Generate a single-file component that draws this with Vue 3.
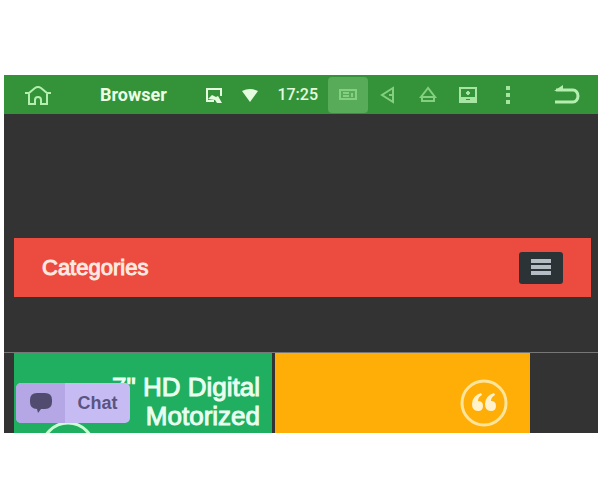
<template>
    <main class="screen">
        <header class="status-bar">
            <button class="home" type="button" aria-label="Home">
                <svg width="28" height="22" viewBox="0 0 28 22">
                    <path d="M1 9h4l6-5q3-2 6 0l6 5h4M5 8v12h6v-4a3 3 0 0 1 6 0v4h6V8" />
                </svg>
            </button>
            <span class="title">Browser</span>

            <div class="indicators">
                <svg width="18" height="18" viewBox="0 0 18 18" aria-hidden="true">
                    <path d="M16 10V3H2v12h7" />
                    <path class="solid" d="M3 13l4-4 4 2 2-1 4 7h-5l-2-3z" />
                </svg>
                <svg width="18" height="18" viewBox="0 0 18 18" aria-hidden="true">
                    <path class="solid" d="M1 5q8-4 16 0L9 16z" />
                </svg>
                <time class="clock">17:25</time>
            </div>

            <nav class="actions">
                <button class="active" type="button" aria-label="Cast">
                    <svg width="18" height="14" viewBox="0 0 18 14">
                        <path d="M1 2h16v9H1zM4 5h6M4 8h6M13 5v4" />
                    </svg>
                </button>
                <button type="button" aria-label="Previous">
                    <svg width="16" height="18" viewBox="0 0 16 18">
                        <path d="M13 2v14L2 9zM13 9H9" />
                    </svg>
                </button>
                <button type="button" aria-label="Eject">
                    <svg width="18" height="18" viewBox="0 0 18 18">
                        <path d="M9 2 2 11h14zM3 11v4h12v-4" />
                    </svg>
                </button>
                <button type="button" aria-label="Screen">
                    <svg class="bright" width="20" height="18" viewBox="0 0 20 18">
                        <path d="M2 2h16v10H2zM10 5v4M8 7h4" />
                        <path class="solid" d="M1 12h7v2h4v-2h7v5H1z" />
                    </svg>
                </button>
                <button class="bright" type="button" aria-label="More">
                    <svg width="6" height="20" viewBox="0 0 6 20">
                        <path class="solid" d="M1 1h4v4H1zM1 8h4v4H1zM1 15h4v4H1z" />
                    </svg>
                </button>
            </nav>
            <button class="back" type="button" aria-label="Back">
                <svg width="28" height="20" viewBox="0 0 28 20">
                    <path d="M3 5h17a5 6 0 0 1 0 12H2" />
                    <path class="solid" d="M1 6 10 0v6z" />
                </svg>
            </button>
        </header>

        <section class="categories">
            <h1>Categories</h1>
            <button class="menu" type="button" aria-label="Open categories">
                <svg width="20" height="17" viewBox="0 0 20 17">
                    <path d="M0 2h20M0 8h20M0 14h20" />
                </svg>
            </button>
        </section>

        <section class="cards">
            <article class="card green">
                <svg class="ring" width="56" height="56" viewBox="0 0 56 56" aria-hidden="true">
                    <circle cx="28" cy="28" r="26" />
                </svg>
                <h2>7" HD Digital<br />Motorized</h2>
                <button class="chat" type="button">
                    <span class="bubble">
                        <svg width="24" height="22" viewBox="0 0 24 22" aria-hidden="true">
                            <path d="M8 1h8q7 0 7 7v2q0 7-7 7h-4l-3 4-1-4q-7 0-7-7V8q0-7 7-7z" />
                        </svg>
                    </span>
                    <span class="chat-label">Chat</span>
                </button>
            </article>
            <article class="card orange">
                <svg width="50" height="50" viewBox="0 0 50 50" aria-hidden="true">
                    <circle cx="25" cy="25" r="22" />
                    <path
                        class="quote"
                        d="M23 17q-4 2-4 6 5 0 5 5t-5 5q-6 0-6-7 0-8 9-11zM36 17q-4 2-4 6 5 0 5 5t-5 5q-6 0-6-7 0-8 9-11z"
                    />
                </svg>
            </article>
        </section>
    </main>
</template>

<script setup></script>

<style>
body {
    background: #fff;
}
</style>

<style scoped>
.screen {
    margin: 75px 2px 0 4px;
    background: #333;
    color: #fff;
    font-family: "Liberation Sans", Arial, sans-serif;
}

button {
    display: flex;
    align-items: center;
    justify-content: center;
    padding: 0;
    border: 0;
    background: none;
    color: inherit;
    font: inherit;
}

/* Status bar */
.status-bar {
    display: flex;
    align-items: center;
    height: 39px;
    padding: 0 10px 0 20px;
    background: #349338;
    color: #b4efb0;
}

.status-bar svg {
    fill: none;
    stroke: currentColor;
    stroke-width: 2;
}

.status-bar .solid {
    fill: currentColor;
    stroke: none;
}

.title {
    margin-left: 48px;
    color: #eaffe6;
    font: bold 18px Roboto, sans-serif;
}

.indicators {
    display: flex;
    align-items: center;
    gap: 18px;
    margin-left: auto;
    color: #e4fbe0;
}

.clock {
    font: 500 16px Roboto, sans-serif;
}

.actions {
    display: flex;
    margin-left: 10px;
    color: #84cf80;
}

.actions .bright {
    color: #a6e6a2;
}

.actions button {
    width: 40px;
    height: 36px;
}

.actions .active {
    border-radius: 4px;
    background: #58ab58;
}

.back {
    width: 42px;
    margin-left: 18px;
}

.back svg {
    stroke-width: 3;
}

/* Categories strip */
.categories {
    display: flex;
    align-items: center;
    justify-content: space-between;
    height: 59px;
    margin: 124px 7px 55px 10px;
    padding: 0 28px;
    background: #ec4c40;
}

.categories h1 {
    margin: 0;
    color: #ffe9e2;
    font-size: 22px;
    font-weight: 400;
    -webkit-text-stroke: 1px currentColor;
}

.menu {
    width: 44px;
    height: 32px;
    border-radius: 3px;
    background: #2b3337;
}

.menu svg {
    stroke: #b4bcc4;
    stroke-width: 4;
}

/* Cards */
.cards {
    display: grid;
    grid-template-columns: 258fr 255fr 58fr;
    gap: 3px;
    height: 80px;
    padding: 0 7px 0 10px;
    border-top: 1px solid #777;
}

.card {
    position: relative;
    overflow: hidden;
}

.green {
    background: #20ae60;
}

.green h2 {
    margin: 20px 12px 0 0;
    color: #e9fff0;
    font-size: 26px;
    font-weight: 400;
    line-height: 29px;
    text-align: right;
    -webkit-text-stroke: 1px currentColor;
}

.ring {
    position: absolute;
    top: 68px;
    left: 26px;
    fill: none;
    stroke: #c8ffd4;
    stroke-width: 3;
}

.chat {
    position: absolute;
    top: 30px;
    left: 2px;
    overflow: hidden;
    height: 40px;
    border-radius: 5px;
    background: #c6bcf3;
    color: #5a5480;
}

.bubble {
    display: flex;
    align-items: center;
    justify-content: center;
    width: 49px;
    height: 40px;
    background: #b5a7e6;
}

.bubble svg {
    fill: #514b70;
}

.chat-label {
    width: 65px;
    font-size: 18px;
    font-weight: bold;
}

.orange {
    display: flex;
    justify-content: flex-end;
    padding: 25px 21px 0 0;
    background: #ffae08;
}

.orange circle {
    fill: none;
    stroke: #ffe59c;
    stroke-width: 3;
}

.quote {
    fill: #fff2cc;
}
</style>
